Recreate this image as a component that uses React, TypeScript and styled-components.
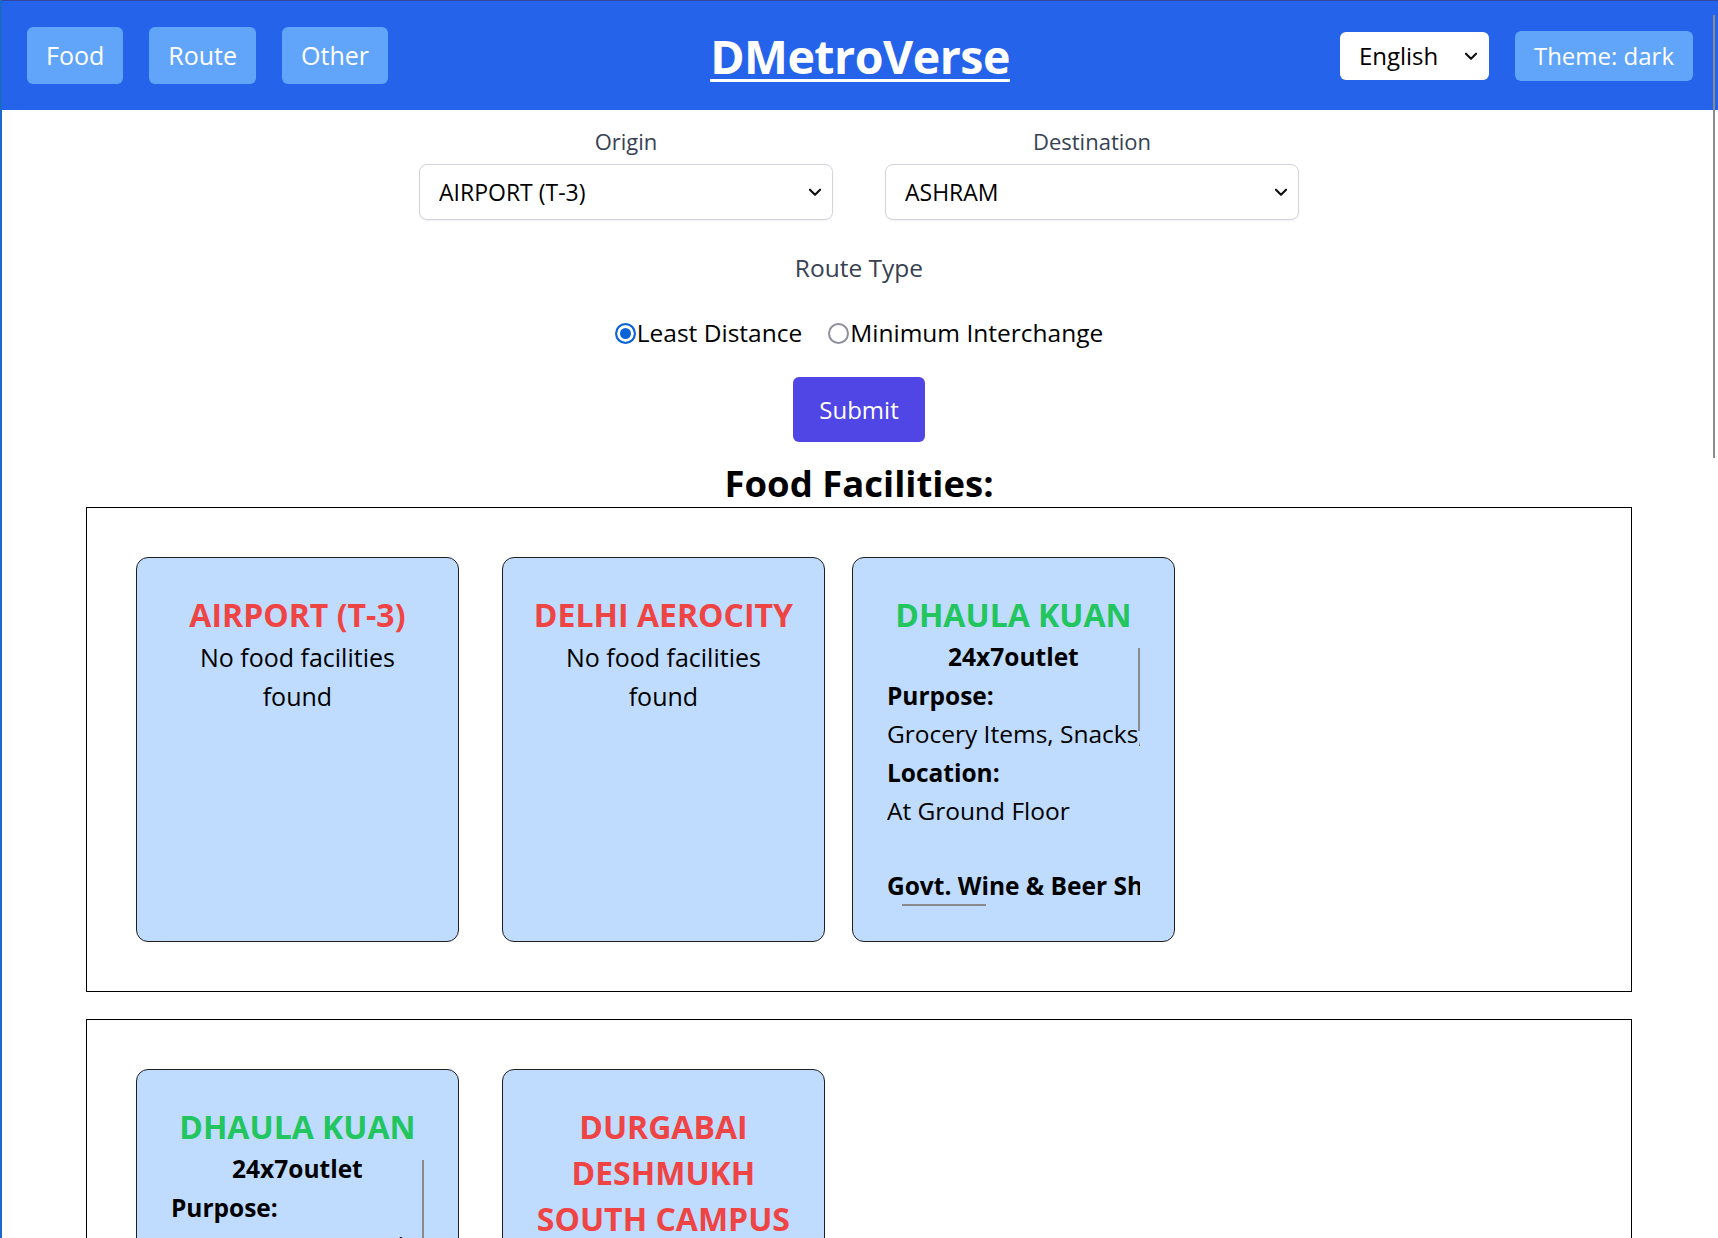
import React, { useState } from "react";
import styled, { createGlobalStyle } from "styled-components";

const GlobalStyle = createGlobalStyle`
  html {
    scrollbar-width: none;
  }
  html::-webkit-scrollbar {
    display: none;
  }
  body {
    margin: 0;
    background: #ffffff;
    font-family: "Open Sans", "Noto Sans", sans-serif;
    color: #000000;
  }
  body::before {
    content: "";
    position: fixed;
    left: 0;
    top: 0;
    bottom: 0;
    width: 2px;
    background: #1b6ac9;
    z-index: 20;
  }
`;

const PageThumb = styled.div`
  position: fixed;
  right: 3px;
  top: 15px;
  width: 2px;
  height: 443px;
  background: #8a8a8a;
  z-index: 20;
`;

const Header = styled.header`
  display: grid;
  grid-template-columns: 1fr auto 1fr;
  align-items: center;
  height: 109px;
  padding: 0 25px 0 27px;
  background: #2563eb;
  border-top: 1px solid #34459e;
`;

const Nav = styled.nav`
  display: flex;
  gap: 26px;
`;

const HeaderButton = styled.button<{ $slim?: boolean }>`
  padding: ${(p) => (p.$slim ? "6px 19px" : "10px 19px")};
  border: none;
  border-radius: 6px;
  background: #60a5fa;
  color: #ffffff;
  font-family: inherit;
  font-size: ${(p) => (p.$slim ? "24px" : "25px")};
  line-height: ${(p) => (p.$slim ? "38px" : "37px")};
  cursor: pointer;
`;

const Title = styled.a`
  color: #ffffff;
  font-size: 46.5px;
  font-weight: 700;
  text-decoration: underline;
  text-decoration-thickness: 3px;
  text-underline-offset: 5px;
  letter-spacing: -0.5px;
`;

const Controls = styled.div`
  display: flex;
  justify-content: flex-end;
  align-items: center;
  gap: 26px;
`;

const SelectWrap = styled.div<{ $width: number; $height: number }>`
  position: relative;
  width: ${(p) => p.$width}px;
  height: ${(p) => p.$height}px;
`;

const Select = styled.select<{ $bordered?: boolean }>`
  appearance: none;
  width: 100%;
  height: 100%;
  padding: 0 40px 0 19px;
  border: ${(p) => (p.$bordered ? "1px solid #d1d5db" : "none")};
  border-radius: ${(p) => (p.$bordered ? "8px" : "6px")};
  background: #ffffff;
  box-shadow: ${(p) => (p.$bordered ? "0 1px 2px rgba(0,0,0,0.06)" : "none")};
  color: #000000;
  font-family: inherit;
  font-size: ${(p) => (p.$bordered ? "23px" : "24px")};
  outline: none;
`;

const Chevron = styled.svg`
  position: absolute;
  right: 9px;
  top: 50%;
  width: 18px;
  height: 18px;
  margin-top: -9px;
  pointer-events: none;
`;

const Main = styled.main`
  display: flex;
  flex-direction: column;
  align-items: center;
`;

const FormRow = styled.div`
  display: flex;
  gap: 52px;
  margin-top: 14px;
`;

const Field = styled.div`
  display: flex;
  flex-direction: column;
  align-items: center;
  gap: 6px;
`;

const Label = styled.label`
  color: #374151;
  font-size: 22px;
  line-height: 34px;
`;

const RouteLabel = styled(Label)`
  margin-top: 30px;
  font-size: 24.5px;
  line-height: 36px;
`;

const RadioRow = styled.div`
  display: flex;
  align-items: center;
  gap: 26px;
  margin-top: 29px;
`;

const RadioOption = styled.label`
  display: flex;
  align-items: center;
  font-size: 24.5px;
  line-height: 36px;
  color: #000000;
  cursor: pointer;
`;

const Radio = styled.input`
  appearance: none;
  width: 21px;
  height: 21px;
  margin: 0 1px 0 0;
  border: 2px solid #8f8f9d;
  border-radius: 50%;
  background: #ffffff;

  &:checked {
    border-color: #0b63d8;
    background: #0b63d8;
    box-shadow: inset 0 0 0 3px #ffffff;
  }
`;

const SubmitButton = styled.button`
  margin-top: 26px;
  padding: 14px 26px;
  border: none;
  border-radius: 6px;
  background: #4f46e5;
  color: #ffffff;
  font-family: inherit;
  font-size: 24px;
  line-height: 37px;
  cursor: pointer;
`;

const Heading = styled.h2`
  margin: 17px 0 0;
  font-size: 36.5px;
  font-weight: 700;
  line-height: 48px;
`;

const Box = styled.section`
  box-sizing: border-box;
  width: 90%;
  padding: 49px;
  border: 1px solid #000000;
  margin-bottom: 27px;
`;

const CardRow = styled.div`
  display: flex;
  gap: 27px;
`;

const Card = styled.div`
  box-sizing: border-box;
  width: 323px;
  height: 385px;
  flex-shrink: 0;
  display: flex;
  flex-direction: column;
  padding: 34px 34px;
  border: 1px solid #1f1f1f;
  border-radius: 12px;
  background: #bfdbfe;
  text-align: center;

  &:first-child {
    margin-right: 16px;
  }
`;

const StationName = styled.h3<{ $hasFood: boolean }>`
  margin: 0 -10px;
  font-size: 32px;
  font-weight: 700;
  line-height: 46px;
  color: ${(p) => (p.$hasFood ? "#22c55e" : "#ef4444")};
`;

const Empty = styled.p`
  margin: 0;
  font-size: 25px;
  line-height: 39px;
`;

const Scroller = styled.div`
  position: relative;
  flex: 1;
  min-height: 0;
`;

const ScrollInner = styled.div`
  height: 100%;
  overflow: hidden;
  font-size: 24.5px;
  line-height: 38.5px;
  white-space: nowrap;
  text-align: left;
`;

const OutletName = styled.div`
  font-weight: 700;
  text-align: center;
`;

const Key = styled.div`
  font-weight: 700;
`;

const Spacer = styled.div`
  height: 36px;
`;

const Thumb = styled.div<{ $dir: "v" | "h" }>`
  position: absolute;
  background: #8a8a8a;
  ${(p) =>
    p.$dir === "v"
      ? "right: 0; top: 10px; width: 2px; height: 83px;"
      : "left: 15px; bottom: 1px; height: 2px; width: 84px;"}
`;

type Outlet = { name: string; purpose: string; location: string };
type Station = { name: string; outlets: Outlet[] };

const dhaulaKuan: Station = {
  name: "DHAULA KUAN",
  outlets: [
    { name: "24x7outlet", purpose: "Grocery Items, Snacks, Beverages", location: "At Ground Floor" },
    { name: "Govt. Wine & Beer Shop", purpose: "Liquor Shop", location: "At Ground Floor" },
  ],
};

const groups: Station[][] = [
  [
    { name: "AIRPORT (T-3)", outlets: [] },
    { name: "DELHI AEROCITY", outlets: [] },
    dhaulaKuan,
  ],
  [dhaulaKuan, { name: "DURGABAI DESHMUKH SOUTH CAMPUS", outlets: [] }],
];

const ChevronIcon = () => (
  <Chevron viewBox="0 0 16 16">
    <path d="M3.5 6l4.5 4.5L12.5 6" fill="none" stroke="#111" strokeWidth="1.9" strokeLinecap="round" strokeLinejoin="round" />
  </Chevron>
);

const StationCard: React.FC<{ station: Station }> = ({ station }) => {
  const hasFood = station.outlets.length > 0;
  return (
    <Card>
      <StationName $hasFood={hasFood}>{station.name}</StationName>
      {!hasFood && <Empty>No food facilities found</Empty>}
      {hasFood && (
        <Scroller>
          <ScrollInner>
            {station.outlets.map((o, i) => (
              <div key={i}>
                {i > 0 && <Spacer />}
                <OutletName>{o.name}</OutletName>
                <Key>Purpose:</Key>
                <div>{o.purpose}</div>
                <Key>Location:</Key>
                <div>{o.location}</div>
              </div>
            ))}
          </ScrollInner>
          <Thumb $dir="v" />
          <Thumb $dir="h" />
        </Scroller>
      )}
    </Card>
  );
};

export default function App() {
  const [routeType, setRouteType] = useState("least");

  return (
    <>
      <GlobalStyle />
      <PageThumb />
      <Header>
        <Nav>
          <HeaderButton>Food</HeaderButton>
          <HeaderButton>Route</HeaderButton>
          <HeaderButton>Other</HeaderButton>
        </Nav>
        <Title href="#">DMetroVerse</Title>
        <Controls>
          <SelectWrap $width={149} $height={48}>
            <Select defaultValue="en">
              <option value="en">English</option>
              <option value="hi">हिन्दी</option>
            </Select>
            <ChevronIcon />
          </SelectWrap>
          <HeaderButton $slim>Theme: dark</HeaderButton>
        </Controls>
      </Header>
      <Main>
        <FormRow>
          <Field>
            <Label>Origin</Label>
            <SelectWrap $width={414} $height={56}>
              <Select $bordered defaultValue="AIRPORT (T-3)">
                <option>AIRPORT (T-3)</option>
              </Select>
              <ChevronIcon />
            </SelectWrap>
          </Field>
          <Field>
            <Label>Destination</Label>
            <SelectWrap $width={414} $height={56}>
              <Select $bordered defaultValue="ASHRAM">
                <option>ASHRAM</option>
              </Select>
              <ChevronIcon />
            </SelectWrap>
          </Field>
        </FormRow>
        <RouteLabel>Route Type</RouteLabel>
        <RadioRow>
          <RadioOption>
            <Radio type="radio" name="route" checked={routeType === "least"} onChange={() => setRouteType("least")} />
            Least Distance
          </RadioOption>
          <RadioOption>
            <Radio type="radio" name="route" checked={routeType === "min"} onChange={() => setRouteType("min")} />
            Minimum Interchange
          </RadioOption>
        </RadioRow>
        <SubmitButton>Submit</SubmitButton>
        <Heading>Food Facilities:</Heading>
        {groups.map((g, gi) => (
          <Box key={gi}>
            <CardRow>
              {g.map((s, si) => (
                <StationCard key={si} station={s} />
              ))}
            </CardRow>
          </Box>
        ))}
      </Main>
    </>
  );
}
